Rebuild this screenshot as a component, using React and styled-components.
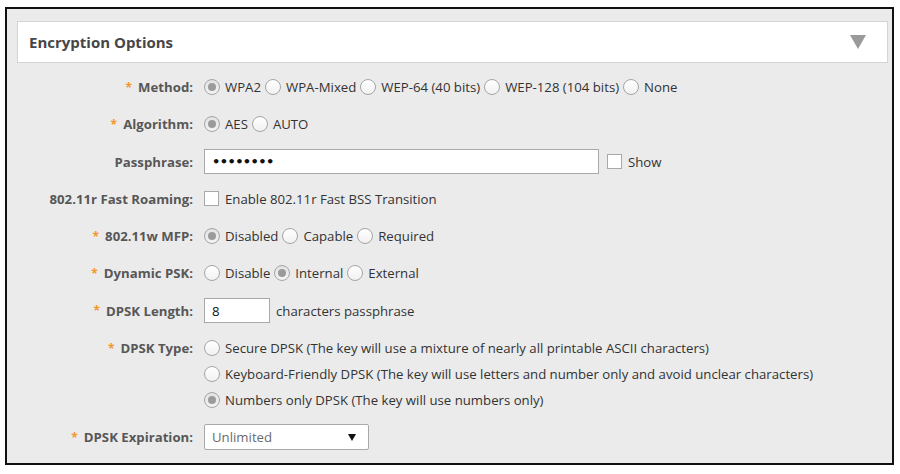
import React from 'react'
import styled, { createGlobalStyle } from 'styled-components'

const GlobalStyle = createGlobalStyle`
  body {
    margin: 0;
    background: #ffffff;
    font-family: "Open Sans", "DejaVu Sans", sans-serif;
  }
`

const Frame = styled.section`
  margin: 7px 0 0 5px;
  width: 871px;
  height: 442px;
  border: 2px solid #111;
  background-color: #ebebeb;
  padding: 12px 4px 0 10px;
  box-sizing: content-box;
`

const Header = styled.div`
  height: 40px;
  background: #fff;
  border: 1px solid #d4d4d4;
  display: flex;
  align-items: center;
  justify-content: space-between;
  padding: 0 21px 0 11px;
`

const Title = styled.h2`
  margin: 0;
  font-size: 15px;
  font-weight: 700;
  color: #464646;
`

const Caret = styled.span`
  width: 0;
  height: 0;
  border-left: 8px solid transparent;
  border-right: 8px solid transparent;
  border-top: 14px solid #9a9a9a;
`

const Form = styled.div`
  display: grid;
  grid-template-columns: 186px 1fr;
  column-gap: 11px;
  row-gap: 11.3px;
  margin: 11px 0 0 -10px;
  font-size: 13.2px;
`

const Label = styled.div`
  height: 26px;
  display: flex;
  align-items: center;
  justify-content: flex-end;
  font-weight: 700;
  color: #575757;
  white-space: nowrap;
`

const Star = styled.span`
  color: #f5962a;
  margin-right: 6px;
  font-size: 12px;
`

const Controls = styled.div`
  display: flex;
  flex-direction: ${(p) => (p.$stack ? 'column' : 'row')};
  align-items: ${(p) => (p.$stack ? 'flex-start' : 'center')};
  min-height: 26px;
  color: #333;
`

const Option = styled.label`
  display: flex;
  align-items: center;
  height: 26px;
  margin-right: 4px;
  white-space: nowrap;
`

const Radio = styled.span`
  width: 14px;
  height: 14px;
  border-radius: 50%;
  border: 1px solid #a5a5a5;
  background: ${(p) => (p.$on ? 'linear-gradient(#e2e2e2, #f4f4f4)' : 'linear-gradient(#ffffff, #f1f1f1)')};
  margin-right: 5px;
  display: flex;
  align-items: center;
  justify-content: center;
  flex-shrink: 0;
  &::after {
    content: '';
    display: ${(p) => (p.$on ? 'block' : 'none')};
    width: 8px;
    height: 8px;
    border-radius: 50%;
    background: #9b9b9b;
  }
`

const Check = styled.span`
  width: 13px;
  height: 13px;
  border: 1px solid #a9a9a9;
  background: #fff;
  margin-right: 6px;
  flex-shrink: 0;
`

const TextInput = styled.div`
  width: ${(p) => p.$w}px;
  height: 25px;
  box-sizing: border-box;
  background: #fff;
  border: 1px solid #a9a9a9;
  display: flex;
  align-items: center;
  padding-left: 7px;
  margin-right: ${(p) => p.$gap || 6}px;
  color: #111;
  font-family: ${(p) => (p.$dots ? '"DejaVu Sans", sans-serif' : 'inherit')};
  font-weight: ${(p) => (p.$dots ? 700 : 400)};
  font-size: ${(p) => (p.$dots ? '13px' : '13.2px')};
  letter-spacing: ${(p) => (p.$dots ? '-0.6px' : '0')};
`

const Select = styled.div`
  width: 165px;
  height: 26px;
  box-sizing: border-box;
  background: #fff;
  border: 1px solid #a9a9a9;
  border-radius: 2px;
  display: flex;
  align-items: center;
  justify-content: space-between;
  padding: 0 12px 0 7px;
  color: #6a6a6a;
  &::after {
    content: '';
    border-left: 4px solid transparent;
    border-right: 4px solid transparent;
    border-top: 7px solid #111;
  }
`

const Radios = ({ items, on }) =>
  items.map((t, i) => (
    <Option key={t}>
      <Radio $on={i === on} />
      {t}
    </Option>
  ))

const Req = ({ children }) => (
  <Label>
    <Star>*</Star>
    {children}
  </Label>
)

export default function App() {
  return (
    <>
      <GlobalStyle />
      <Frame>
        <Header>
          <Title>Encryption Options</Title>
          <Caret />
        </Header>
        <Form>
          <Req>Method:</Req>
          <Controls>
            <Radios items={['WPA2', 'WPA-Mixed', 'WEP-64 (40 bits)', 'WEP-128 (104 bits)', 'None']} on={0} />
          </Controls>

          <Req>Algorithm:</Req>
          <Controls>
            <Radios items={['AES', 'AUTO']} on={0} />
          </Controls>

          <Label>Passphrase:</Label>
          <Controls>
            <TextInput $w={395} $dots $gap={8}>••••••••</TextInput>
            <Option>
              <Check />
              Show
            </Option>
          </Controls>

          <Label>802.11r Fast Roaming:</Label>
          <Controls>
            <Option>
              <Check />
              Enable 802.11r Fast BSS Transition
            </Option>
          </Controls>

          <Req>802.11w MFP:</Req>
          <Controls>
            <Radios items={['Disabled', 'Capable', 'Required']} on={0} />
          </Controls>

          <Req>Dynamic PSK:</Req>
          <Controls>
            <Radios items={['Disable', 'Internal', 'External']} on={1} />
          </Controls>

          <Req>DPSK Length:</Req>
          <Controls>
            <TextInput $w={66}>8</TextInput>
            characters passphrase
          </Controls>

          <Req>DPSK Type:</Req>
          <Controls $stack>
            <Radios
              items={[
                'Secure DPSK (The key will use a mixture of nearly all printable ASCII characters)',
                'Keyboard-Friendly DPSK (The key will use letters and number only and avoid unclear characters)',
                'Numbers only DPSK (The key will use numbers only)',
              ]}
              on={2}
            />
          </Controls>

          <Req>DPSK Expiration:</Req>
          <Controls>
            <Select>Unlimited</Select>
          </Controls>
        </Form>
      </Frame>
    </>
  )
}
